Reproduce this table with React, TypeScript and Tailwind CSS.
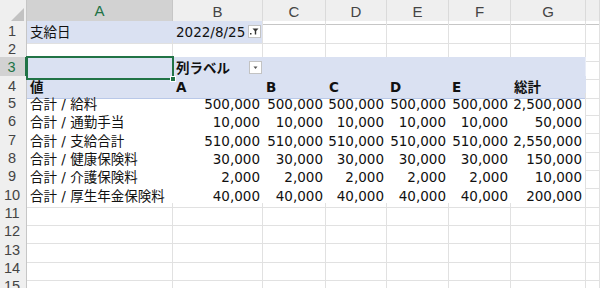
import React from 'react'

const COLS = ['A', 'B', 'C', 'D', 'E', 'F', 'G', '']
const ROW_H = ['h-[18px]', 'h-[18px]', 'h-[19px]', 'h-[17px]', 'h-[18px]', 'h-[19px]', 'h-[18px]', 'h-[18px]', 'h-[19px]', 'h-[18px]', 'h-[18px]', 'h-[19px]', 'h-[18px]', 'h-[18px]', 'h-[19px]']
const GRID = 'grid grid-cols-[27px_146px_90px_63px_61px_62px_62px_75px_14px]'
const FONT = "font-['DejaVu_Sans','Noto_Sans_CJK_JP',sans-serif]"
const BLUE = 'bg-[#dae1f2]'
const LINE = 'border-[#e1e1e1]'

const DATA: [string, number[]][] = [
  ['合計 / 給料', [500000, 500000, 500000, 500000, 500000, 2500000]],
  ['合計 / 通勤手当', [10000, 10000, 10000, 10000, 10000, 50000]],
  ['合計 / 支給合計', [510000, 510000, 510000, 510000, 510000, 2550000]],
  ['合計 / 健康保険料', [30000, 30000, 30000, 30000, 30000, 150000]],
  ['合計 / 介護保険料', [2000, 2000, 2000, 2000, 2000, 10000]],
  ['合計 / 厚生年金保険料', [40000, 40000, 40000, 40000, 40000, 200000]],
]

function FilterButton({ active }: { active?: boolean }) {
  return (
    <div className="w-[13px] h-[13px] bg-white border border-[#c3c3c3] flex items-center justify-center shrink-0">
      {active ? (
        <svg width="9" height="7" viewBox="0 0 9 7">
          <rect x="0" y="5" width="1.5" height="1.5" fill="#333" />
          <path d="M2.5 0.5 H8.5 L6.2 3 V6.5 H4.8 V3 Z" fill="#333" />
        </svg>
      ) : (
        <svg width="7" height="4" viewBox="0 0 7 4">
          <path d="M1.5 0.5 H5.5 L3.5 3 Z" fill="#555" />
        </svg>
      )}
    </div>
  )
}

function RowHead({ n, active }: { n: number; active?: boolean }) {
  return (
    <div
      className={`flex items-center justify-center pr-[2px] font-['Liberation_Sans',sans-serif] text-[14.5px] border-b ${
        active
          ? 'bg-[#d2d2d2] text-[#217346] border-r-2 border-r-[#217346] border-b-[#c6c6c6]'
          : 'bg-[#efefef] text-[#444] border-r border-r-[#c6c6c6] border-b-[#dcdcdc]'
      }`}
    >
      {n}
    </div>
  )
}

function Plain({ cls = '' }: { cls?: string }) {
  return <div className={`border-r border-b ${LINE} ${cls}`} />
}

function fmt(n: number) {
  return n.toLocaleString('en-US')
}

export default function App() {
  return (
    <div className={`w-[600px] h-[288px] overflow-hidden bg-white text-[13.5px] text-[#111] ${FONT}`}>
      {/* column headers */}
      <div className={`${GRID} h-[21px] bg-[#efefef]`}>
        <div className="flex items-end justify-end border-r border-b border-[#c6c6c6] pr-[2px] pb-[2px]">
          <svg width="14" height="14" viewBox="0 0 14 14">
            <path d="M14 0 V14 H0 Z" fill="#c2c2c2" />
          </svg>
        </div>
        {COLS.map((c, i) => (
          <div
            key={i}
            className={`flex items-center justify-center font-['Liberation_Sans',sans-serif] text-[15px] ${
              c === 'A'
                ? 'bg-[#d2d2d2] text-[#217346] border-b-2 border-b-[#217346] border-r border-r-[#c6c6c6]'
                : 'text-[#444] border-b border-b-[#c6c6c6] border-r border-r-[#dadada]'
            }`}
          >
            {c}
          </div>
        ))}
      </div>

      {ROW_H.map((h, r) => {
        const n = r + 1
        return (
          <div key={n} className={`${GRID} ${h}`}>
            <RowHead n={n} active={n === 3} />
            {n === 1 && (
              <>
                <div className={`${BLUE} flex items-center pl-[3px] border-b ${LINE}`}>支給日</div>
                <div className={`${BLUE} flex items-center justify-between pl-[3px] pr-[1px] border-r border-b ${LINE}`}>
                  <span>2022/8/25</span>
                  <FilterButton active />
                </div>
                {[0, 1, 2, 3, 4, 5].map((k) => <Plain key={k} />)}
              </>
            )}
            {n === 3 && (
              <>
                <div className={`${BLUE} relative border-b border-[#e8ecf7]`}>
                  <div className="absolute -left-px -top-px -right-px -bottom-px border-2 border-[#217346]">
                    <div className="absolute -right-[4px] -bottom-[4px] w-[6px] h-[6px] bg-[#217346] border border-white" />
                  </div>
                </div>
                <div className={`${BLUE} flex items-center justify-between pl-[3px] pr-[1px] font-bold border-b border-[#e8ecf7]`}>
                  <span>列ラベル</span>
                  <FilterButton />
                </div>
                {[0, 1, 2, 3].map((k) => <div key={k} className={`${BLUE} border-b border-[#e8ecf7]`} />)}
                <div className={`${BLUE} border-r border-b border-[#e8ecf7]`} />
                <Plain />
              </>
            )}
            {n === 4 && (
              <>
                {['値', 'A', 'B', 'C', 'D', 'E', '総計'].map((t, k) => (
                  <div key={k} className={`${BLUE} flex items-center pl-[3px] font-bold border-b border-[#b9c8e8]`}>
                    {t}
                  </div>
                ))}
                <Plain />
              </>
            )}
            {n >= 5 && n <= 10 && (
              <>
                <div className={`flex items-center pl-[3px] whitespace-nowrap ${n === 10 ? `border-b ${LINE}` : ''}`}>
                  {DATA[n - 5][0]}
                </div>
                {DATA[n - 5][1].map((v, k) => (
                  <div
                    key={k}
                    className={`flex items-center justify-end pr-[3px] ${k === 5 ? `border-r ${LINE}` : ''} ${
                      n === 10 ? `border-b ${LINE}` : ''
                    }`}
                  >
                    {fmt(v)}
                  </div>
                ))}
                <Plain />
              </>
            )}
            {(n === 2 || n > 10) && [0, 1, 2, 3, 4, 5, 6, 7].map((k) => <Plain key={k} />)}
          </div>
        )
      })}
    </div>
  )
}
